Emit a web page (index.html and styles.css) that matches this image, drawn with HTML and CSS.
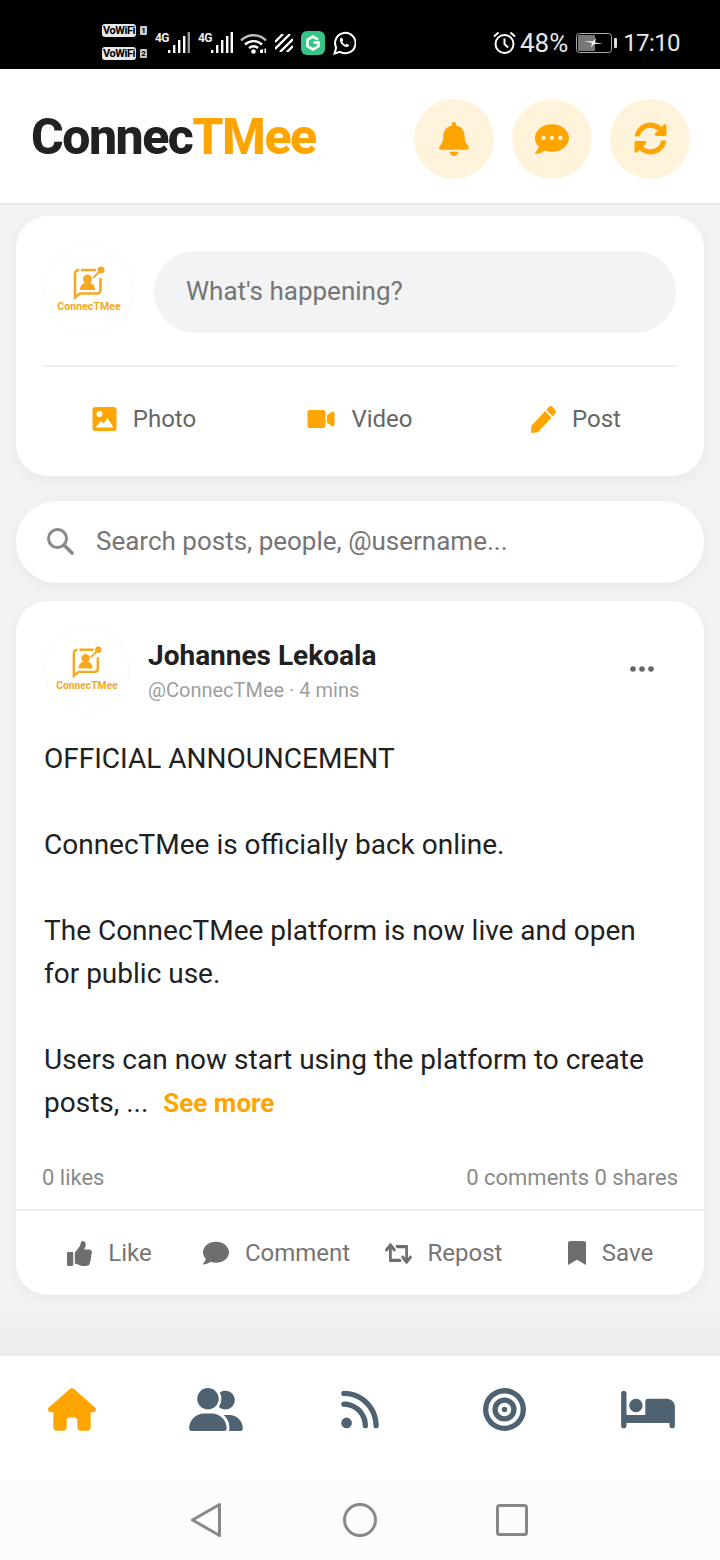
FILE: index.html
```html
<!DOCTYPE html>
<html lang="en">
<head>
    <meta charset="UTF-8">
    <meta name="viewport" content="width=device-width, initial-scale=1.0">
    <title>ConnecTMee</title>
    <link rel="stylesheet" href="styles.css">
</head>
<body>
<div class="page">
    <div class="status-bar">
        <div class="status-left">
            <div class="vowifi">
                <div class="vowifi-row"><span class="vowifi-tag">VoWiFi</span><span class="sim-num">1</span></div>
                <div class="vowifi-row"><span class="vowifi-tag">VoWiFi</span><span class="sim-num">2</span></div>
            </div>
            <div class="signal">
                <span class="net">4G</span>
                <svg width="22" height="24" viewBox="0 0 22 24"><g fill="#fff"><rect x="0" y="19" width="2.4" height="3"/><rect x="5" y="14" width="2.4" height="8"/><rect x="10" y="9" width="2.4" height="13"/><rect x="15" y="5" width="2.4" height="17"/><rect x="19.6" y="1" width="2.4" height="21" opacity=".6"/></g></svg>
            </div>
            <div class="signal">
                <span class="net">4G</span>
                <svg width="22" height="24" viewBox="0 0 22 24"><g fill="#fff"><rect x="0" y="19" width="2.4" height="3"/><rect x="5" y="14" width="2.4" height="8"/><rect x="10" y="9" width="2.4" height="13"/><rect x="15" y="5" width="2.4" height="17"/><rect x="19.6" y="1" width="2.4" height="21"/></g></svg>
            </div>
            <svg class="wifi" width="27" height="22" viewBox="0 0 27 22"><g fill="none" stroke="#fff" stroke-width="2.4"><path d="M1 8.500C8 1.500 19 1.500 26 8.500" opacity=".75"/><path d="M5 12.500C10 8 17 8 22 12.500"/><path d="M9 16c3-2.400 6-2.400 9 0"/></g><circle cx="13.500" cy="19.500" r="2.300" fill="#fff"/><path d="M20 21v-3l3-1v4zM24.500 16.500h1.500v4.500h-1.500z" fill="#fff"/></svg>
            <svg class="stripes" width="18" height="18" viewBox="0 0 18 18"><g stroke="#fff" stroke-width="2.300"><path d="M0 8L8 0M0 15L15 0M5 18L18 5M12 18l6-6"/></g></svg>
            <svg class="app-g" width="24" height="24" viewBox="0 0 24 24"><rect width="24" height="24" rx="6" fill="#35c48a"/><path d="M17 8.500L12 5.600 6.500 8.700v6.600L12 18.400l5.500-3.100V11.500h-5" fill="none" stroke="#fff" stroke-width="2.600"/></svg>
            <svg class="whatsapp" width="23" height="24" viewBox="0 0 23 24"><path d="M1.500 22.500l1.700-5.800A10.200 10.200 0 1 1 7 20.800z" fill="none" stroke="#fff" stroke-width="2"/><path d="M8 6.800c-1.600 1-1.600 3 0 5.400 1.700 2.500 4 4 6 3.800 1.400-.2 2-1.100 2-2l-2.400-1.300-1.200 1.100c-1.400-.6-2.600-1.900-3.200-3.300l1-1.100-1-2.600z" fill="#fff"/></svg>
        </div>
        <div class="status-right">
            <svg width="23" height="24" viewBox="0 0 23 24"><circle cx="11.500" cy="13" r="9" fill="none" stroke="#fff" stroke-width="2"/><path d="M11.500 7.500V13l3.500 3.500" fill="none" stroke="#fff" stroke-width="2"/><path d="M1 5.500L5.500 1.500M22 5.500L17.500 1.500" stroke="#fff" stroke-width="2"/></svg>
            <span class="status-text pct">48%</span>
            <svg class="battery" width="41" height="20" viewBox="0 0 41 20"><rect x=".5" y=".5" width="35" height="19" rx="3" fill="none" stroke="#aaa"/><rect x="2" y="2" width="17" height="16" rx="1" fill="#777"/><path d="M8 8l9 .5 3-3.500-1 4.500 8 1-9 .5-3 3.500 1-4.500z" fill="#fff"/><rect x="38" y="5" width="3" height="10" rx="1" fill="#ddd"/></svg>
            <span class="status-text clock">17:10</span>
        </div>
    </div>

    <header class="top-bar">
        <div class="logo">Connec<span class="logo-accent">TMee</span></div>
        <div class="top-actions">
            <button class="round-btn"><svg width="30" height="34" viewBox="0 0 448 512"><path d="M224 512c35.32 0 63.97-28.65 63.97-64H160.03c0 35.35 28.65 64 63.97 64zm215.39-149.71c-19.32-20.76-55.47-51.99-55.47-154.29 0-77.7-54.48-139.9-127.94-155.16V32c0-17.67-14.32-32-31.98-32s-31.98 14.33-31.98 32v20.84C118.56 68.1 64.08 130.3 64.08 208c0 102.3-36.15 133.53-55.47 154.29-6 6.45-8.66 14.16-8.61 21.71.11 16.4 12.98 32 32.1 32h383.8c19.12 0 32-15.6 32.1-32 .05-7.55-2.61-15.27-8.61-21.71z"/></svg></button>
            <button class="round-btn"><svg width="34" height="34" viewBox="0 0 512 512"><path d="M256 32C114.6 32 0 125.1 0 240c0 49.6 21.4 95 57 130.7C44.5 421.1 2.7 466 2.2 466.5c-2.2 2.3-2.8 5.7-1.5 8.7S4.8 480 8 480c66.3 0 116-31.8 140.6-51.4 32.7 12.3 69 19.4 107.4 19.4 141.4 0 256-93.1 256-208S397.4 32 256 32zM128 272c-17.7 0-32-14.3-32-32s14.3-32 32-32 32 14.3 32 32-14.3 32-32 32zm128 0c-17.7 0-32-14.3-32-32s14.3-32 32-32 32 14.3 32 32-14.3 32-32 32zm128 0c-17.7 0-32-14.3-32-32s14.3-32 32-32 32 14.3 32 32-14.3 32-32 32z"/></svg></button>
            <button class="round-btn"><svg width="33" height="33" viewBox="0 0 512 512"><path d="M370.72 133.28C339.458 104.008 298.888 87.962 255.848 88c-77.458.068-144.328 53.178-162.791 126.85-1.344 5.363-6.122 9.15-11.651 9.15H24.103c-7.498 0-13.194-6.807-11.807-14.176C33.933 94.924 134.813 8 256 8c66.448 0 126.791 26.136 171.315 68.685L463.03 40.97C478.149 25.851 504 36.559 504 57.941V192c0 13.255-10.745 24-24 24H345.941c-21.382 0-32.09-25.851-16.971-40.971l41.75-41.749zM32 296h134.059c21.382 0 32.09 25.851 16.971 40.971l-41.75 41.75c31.262 29.273 71.835 45.319 114.876 45.28 77.418-.07 144.315-53.144 162.787-126.849 1.344-5.363 6.122-9.15 11.651-9.15h57.304c7.498 0 13.194 6.807 11.807 14.176C478.067 417.076 377.187 504 256 504c-66.448 0-126.791-26.136-171.315-68.685L48.97 471.03C33.851 486.149 8 475.441 8 454.059V320c0-13.255 10.745-24 24-24z"/></svg></button>
        </div>
    </header>

    <main class="feed">
        <section class="card composer">
            <div class="composer-top">
                <div class="avatar">
                    <svg width="34" height="34" viewBox="0 0 34 34"><path d="M9 4h15M28.500 12v12c0 2-1.500 3.500-3.500 3.500H8l-5 4V8c0-2.500 2-4 4-4" fill="none" stroke="#f7a823" stroke-width="2.600"/><circle cx="29" cy="4" r="3.500" fill="#f7a823"/><path d="M21 12l6-6" stroke="#f7a823" stroke-width="2"/><circle cx="15.500" cy="13" r="4.500" fill="#f7a823"/><path d="M8 24c0-5 3-7.500 7.500-7.500S23 19 23 24z" fill="#f7a823"/></svg>
                    <span class="avatar-name">ConnecTMee</span>
                </div>
                <div class="whats-happening">What's happening?</div>
            </div>
            <div class="composer-actions">
                <div class="composer-action"><svg width="25" height="24" viewBox="0 0 24 24"><path fill-rule="evenodd" d="M3 0h18a3 3 0 0 1 3 3v18a3 3 0 0 1-3 3H3a3 3 0 0 1-3-3V3a3 3 0 0 1 3-3zM7 4a3 3 0 1 0 0 6 3 3 0 0 0 0-6zM3 20.500h18l-6-9.500-4 5.500-2.500-2.500z"/></svg>Photo</div>
                <div class="composer-action"><svg width="28" height="24" viewBox="0 0 576 512"><path d="M336.2 64H47.8C21.4 64 0 85.4 0 111.8v288.4C0 426.6 21.4 448 47.8 448h288.4c26.4 0 47.8-21.4 47.8-47.8V111.8c0-26.4-21.4-47.8-47.8-47.8zm189.4 37.7L416 177.3v157.4l109.6 75.5c21.2 14.6 50.4-.3 50.4-25.8V127.5c0-25.4-29.1-40.4-50.4-25.8z"/></svg>Video</div>
                <div class="composer-action"><svg width="25" height="27" viewBox="0 0 512 512" preserveAspectRatio="none"><path d="M290.74 93.24l128.02 128.02-277.99 277.99-114.14 12.6C11.35 513.54-1.56 500.62.14 485.34l12.7-114.22 277.9-277.88zm207.2-19.06l-60.11-60.11c-18.75-18.75-49.16-18.75-67.91 0l-56.55 56.55 128.02 128.02 56.55-56.55c18.75-18.76 18.75-49.16 0-67.91z"/></svg>Post</div>
            </div>
        </section>

        <div class="search-box">
            <svg width="28" height="28" viewBox="0 0 28 28"><circle cx="11.500" cy="11.500" r="9" fill="none" stroke="#8a8a8a" stroke-width="3"/><path d="M18 18l8 8" stroke="#8a8a8a" stroke-width="3.600" stroke-linecap="round"/></svg>
            <span>Search posts, people, @username...</span>
        </div>

        <article class="card post">
            <div class="post-head">
                <div class="avatar avatar-small">
                    <svg width="32" height="32" viewBox="0 0 34 34"><path d="M9 4h15M28.500 12v12c0 2-1.500 3.500-3.500 3.500H8l-5 4V8c0-2.500 2-4 4-4" fill="none" stroke="#f7a823" stroke-width="2.600"/><circle cx="29" cy="4" r="3.500" fill="#f7a823"/><path d="M21 12l6-6" stroke="#f7a823" stroke-width="2"/><circle cx="15.500" cy="13" r="4.500" fill="#f7a823"/><path d="M8 24c0-5 3-7.500 7.500-7.500S23 19 23 24z" fill="#f7a823"/></svg>
                    <span class="avatar-name">ConnecTMee</span>
                </div>
                <div class="post-meta">
                    <div class="post-author">Johannes Lekoala</div>
                    <div class="post-handle">@ConnecTMee · 4 mins</div>
                </div>
                <svg class="post-more" width="24" height="6" viewBox="0 0 24 6"><g fill="#666"><circle cx="3" cy="3" r="2.800"/><circle cx="12" cy="3" r="2.800"/><circle cx="21" cy="3" r="2.800"/></g></svg>
            </div>
            <p class="post-body">OFFICIAL ANNOUNCEMENT<br><br>ConnecTMee is officially back online.<br><br>The ConnecTMee platform is now live and open<br>for public use.<br><br>Users can now start using the platform to create<br>posts, ... <a class="see-more">See more</a></p>
            <div class="post-stats">
                <span>0 likes</span>
                <span>0 comments 0 shares</span>
            </div>
            <div class="post-actions">
                <div class="post-action"><svg width="25" height="25" viewBox="0 0 512 512"><path d="M104 224H24c-13.255 0-24 10.745-24 24v240c0 13.255 10.745 24 24 24h80c13.255 0 24-10.745 24-24V248c0-13.255-10.745-24-24-24zM384 81.452c0 42.416-25.97 66.208-33.277 94.548h101.723c33.397 0 59.397 27.746 59.553 58.098.084 17.938-7.546 37.249-19.439 49.197l-.11.11c9.836 23.337 8.237 56.037-9.308 79.469 8.681 25.895-.069 57.704-16.382 74.757 4.298 17.598 2.244 32.575-6.148 44.632C440.202 511.587 389.616 512 346.839 512l-2.845-.001c-48.287-.017-87.806-17.598-119.56-31.725-15.957-7.099-36.821-15.887-52.651-16.178-6.54-.12-11.783-5.457-11.783-11.998v-213.77c0-3.2 1.282-6.271 3.558-8.521 39.614-39.144 56.648-80.587 89.117-113.111 14.804-14.832 20.188-37.236 25.393-58.902C282.515 39.293 291.817 0 312 0c24 0 72 8 72 81.452z"/></svg>Like</div>
                <div class="post-action"><svg width="26" height="26" viewBox="0 0 512 512"><path d="M256 32C114.6 32 0 125.1 0 240c0 49.6 21.4 95 57 130.7C44.5 421.1 2.7 466 2.2 466.5c-2.2 2.3-2.8 5.7-1.5 8.7S4.8 480 8 480c66.3 0 116-31.8 140.6-51.4 32.7 12.3 69 19.4 107.4 19.4 141.4 0 256-93.1 256-208S397.4 32 256 32z"/></svg>Comment</div>
                <div class="post-action"><svg width="27" height="21" viewBox="0 60 640 392" preserveAspectRatio="none"><path d="M629.657 343.598L528.971 444.284c-9.373 9.372-24.568 9.372-33.941 0L394.343 343.598c-9.373-9.373-9.373-24.569 0-33.941l10.823-10.823c9.562-9.562 25.133-9.34 34.419.492L480 342.118V160H292.451a24.005 24.005 0 0 1-16.971-7.029l-16-16C244.361 121.851 255.069 96 276.451 96H520c13.255 0 24 10.745 24 24v222.118l40.416-42.792c9.285-9.831 24.856-10.054 34.419-.492l10.823 10.823c9.372 9.372 9.372 24.569-.001 33.941zm-265.138 15.431A23.999 23.999 0 0 0 347.548 352H160V169.881l40.416 42.792c9.286 9.831 24.856 10.054 34.419.491l10.822-10.822c9.373-9.373 9.373-24.569 0-33.941L144.971 67.716c-9.373-9.373-24.569-9.373-33.941 0L10.343 168.402c-9.373 9.373-9.373 24.569 0 33.941l10.822 10.822c9.562 9.562 25.133 9.34 34.419-.491L96 169.881V392c0 13.255 10.745 24 24 24h243.549c21.382 0 32.09-25.851 16.971-40.971l-16.001-16z"/></svg>Repost</div>
                <div class="post-action"><svg width="18" height="24" viewBox="0 0 384 512"><path d="M0 512V48C0 21.49 21.49 0 48 0h288c26.51 0 48 21.49 48 48v464L192 400 0 512z"/></svg>Save</div>
            </div>
        </article>
    </main>

    <nav class="tab-bar">
        <div class="tab tab-active"><svg width="48" height="43" viewBox="0 0 576 512"><path d="M575.8 255.500c0 18-15 32.100-32 32.100h-32l.7 160.200c0 2.700-.2 5.400-.5 8.100V472c0 22.100-17.900 40-40 40H456c-1.100 0-2.200 0-3.300-.1c-1.400 .1-2.800 .1-4.200 .1H416 392c-22.100 0-40-17.900-40-40V448 384c0-17.700-14.300-32-32-32H256c-17.700 0-32 14.300-32 32v64 24c0 22.100-17.900 40-40 40H160 128.100c-1.500 0-3-.1-4.500-.2c-1.200 .1-2.400 .2-3.600 .2H104c-22.100 0-40-17.900-40-40V360c0-.9 0-1.900 .1-2.800V287.600H32c-18 0-32-14-32-32.100c0-9 3-17 10-24L266.400 8c7-7 15-8 22-8s15 2 21 7L564.800 231.500c8 7 12 15 11 24z"/></svg></div>
        <div class="tab"><svg width="54" height="43" viewBox="0 0 640 512"><path d="M96 128a128 128 0 1 1 256 0A128 128 0 1 1 96 128zM0 482.300C0 383.800 79.800 304 178.300 304h91.400C368.200 304 448 383.800 448 482.300c0 16.400-13.300 29.700-29.700 29.700H29.700C13.300 512 0 498.700 0 482.300zM609.300 512H471.400c5.400-9.400 8.600-20.300 8.600-32v-8c0-60.700-27.100-115.200-69.800-151.800c2.400-.1 4.700-.2 7.100-.2h61.400C567.800 320 640 392.200 640 481.300c0 17-13.800 30.700-30.700 30.700zM432 256c-31 0-59-12.600-79.300-32.900C372.400 196.500 384 163.600 384 128c0-26.800-6.600-52.100-18.300-74.300C384.300 40.100 407.200 32 432 32c61.900 0 112 50.100 112 112s-50.100 112-112 112z"/></svg></div>
        <div class="tab"><svg width="38" height="43" viewBox="0 0 448 512"><path d="M0 64C0 46.300 14.300 32 32 32c229.800 0 416 186.200 416 416c0 17.700-14.300 32-32 32s-32-14.300-32-32C384 253.600 226.400 96 32 96C14.300 96 0 81.700 0 64zM0 416a64 64 0 1 1 128 0A64 64 0 1 1 0 416zM32 160c159.100 0 288 128.900 288 288c0 17.700-14.300 32-32 32s-32-14.300-32-32c0-123.700-100.300-224-224-224c-17.700 0-32-14.300-32-32s14.300-32 32-32z"/></svg></div>
        <div class="tab"><svg width="43" height="43" viewBox="0 0 512 512"><path d="M448 256A192 192 0 1 0 64 256a192 192 0 1 0 384 0zM0 256a256 256 0 1 1 512 0A256 256 0 1 1 0 256zm256 80a80 80 0 1 0 0-160 80 80 0 1 0 0 160zm0-224a144 144 0 1 1 0 288 144 144 0 1 1 0-288zM224 256a32 32 0 1 1 64 0 32 32 0 1 1 -64 0z"/></svg></div>
        <div class="tab"><svg width="54" height="43" viewBox="0 0 640 512"><path d="M32 32c17.700 0 32 14.300 32 32V320H288V160c0-17.700 14.300-32 32-32H544c53 0 96 43 96 96V448c0 17.700-14.300 32-32 32s-32-14.300-32-32V416H352 320 64v32c0 17.700-14.300 32-32 32s-32-14.300-32-32V64C0 46.300 14.300 32 32 32zm144 96a80 80 0 1 1 0 160 80 80 0 1 1 0-160z"/></svg></div>
    </nav>

    <div class="system-nav">
        <svg class="nav-back" width="32" height="36" viewBox="0 0 32 36"><path d="M29.500 2.500v31L2.500 18z" fill="none" stroke="#888" stroke-width="3" stroke-linejoin="round"/></svg>
        <svg width="36" height="36" viewBox="0 0 36 36"><circle cx="18" cy="18" r="15.500" fill="none" stroke="#888" stroke-width="3"/></svg>
        <svg width="32" height="32" viewBox="0 0 32 32"><rect x="1.500" y="1.500" width="29" height="29" rx="2" fill="none" stroke="#888" stroke-width="3"/></svg>
    </div>
</div>
</body>
</html>
```

FILE: styles.css
```css
* {
    box-sizing: border-box;
}

body {
    margin: 0;
    font-family: 'Roboto', 'Liberation Sans', sans-serif;
    background-color: #f2f2f2;
    color: #212121;
}

.page {
    width: 720px;
    height: 1560px;
    display: flex;
    flex-direction: column;
    overflow: hidden;
}

/* phone status bar */
.status-bar {
    height: 69px;
    background-color: #000;
    color: #eee;
    display: flex;
    align-items: center;
    justify-content: space-between;
    padding: 17px 40px 0 102px;
    flex-shrink: 0;
}

.status-left,
.status-right {
    display: flex;
    align-items: center;
}

.status-left {
    gap: 8px;
}

.vowifi {
    display: flex;
    flex-direction: column;
    gap: 10px;
    margin-top: -3px;
}

.vowifi-row {
    display: flex;
    align-items: center;
    gap: 4px;
}

.vowifi-tag {
    background-color: #e8e8e8;
    color: #000;
    font-size: 11px;
    font-weight: 700;
    line-height: 13px;
    height: 13px;
    width: 34px;
    text-align: center;
    border-radius: 3px;
    letter-spacing: -.4px;
}

.sim-num {
    background-color: #ccc;
    color: #000;
    font-size: 8px;
    font-weight: 700;
    line-height: 9px;
    width: 7px;
    height: 9px;
    text-align: center;
    border-radius: 1px;
}

.signal {
    display: flex;
    align-items: flex-end;
}

.net {
    color: #eee;
    font-size: 12px;
    font-weight: 700;
    width: 13px;
    align-self: flex-start;
    line-height: 14px;
    letter-spacing: -.6px;
}

.wifi {
    margin-left: -1px;
}

.status-text {
    font-size: 24px;
    color: #e6e6e6;
    margin-left: 8px;
}

.pct {
    font-size: 26px;
    margin-left: 4px;
}

.clock {
    letter-spacing: -.6px;
    margin-left: 6px;
}

.battery {
    margin-left: 8px;
}

/* header */
.top-bar {
    height: 136px;
    background-color: #fff;
    border-bottom: 2px solid #e8e8e8;
    display: flex;
    align-items: center;
    justify-content: space-between;
    padding: 5px 30px 0 31px;
    flex-shrink: 0;
}

.logo {
    font-size: 50px;
    font-weight: 800;
    letter-spacing: -1.5px;
    color: #212121;
    margin-bottom: 3px;
}

.logo-accent {
    color: #ffa500;
}

.top-actions {
    display: flex;
    gap: 18px;
}

.round-btn {
    width: 80px;
    height: 80px;
    border: none;
    border-radius: 50%;
    background-color: #fff3dc;
    display: flex;
    align-items: center;
    justify-content: center;
    padding: 0;
}

.round-btn svg {
    fill: #ffa500;
}

/* feed */
.feed {
    flex: 1;
    padding: 11px 16px 0;
    background: linear-gradient(#f2f2f2 96%, #ededed);
}

.card {
    background-color: #fff;
    border-radius: 32px;
    box-shadow: 0 4px 12px rgba(0, 0, 0, 0.04);
}

.composer {
    height: 260px;
    padding: 29px 28px 0;
}

.composer-top {
    display: flex;
    align-items: flex-start;
    gap: 20px;
    padding-bottom: 30px;
    border-bottom: 2px solid #efefef;
}

.avatar {
    width: 90px;
    height: 90px;
    border-radius: 50%;
    border: 1px dotted #f1f1f1;
    display: flex;
    flex-direction: column;
    align-items: center;
    justify-content: center;
    flex-shrink: 0;
}

.avatar-small {
    width: 86px;
    height: 86px;
}

.avatar-name {
    font-size: 10.6px;
    font-weight: 700;
    color: #f7a823;
    line-height: 14px;
}

.avatar-small .avatar-name {
    font-size: 10.3px;
    line-height: 16px;
}

.whats-happening {
    flex: 1;
    height: 82px;
    margin-top: 6px;
    border-radius: 41px;
    background-color: #f1f3f4;
    color: #757575;
    font-size: 26px;
    line-height: 80px;
    padding-left: 32px;
}

.composer-actions {
    display: grid;
    grid-template-columns: repeat(3, 216px);
    justify-items: center;
    margin: 33px -8px 0;
}

.composer-action {
    display: flex;
    align-items: center;
    gap: 16px;
    font-size: 24px;
    color: #666;
    line-height: 38px;
}

.composer-action svg {
    fill: #ffa500;
}

.search-box {
    height: 82px;
    margin-top: 25px;
    background-color: #fff;
    border-radius: 41px;
    display: flex;
    align-items: center;
    gap: 22px;
    padding: 0 0 2px 30px;
    font-size: 26px;
    color: #757575;
    box-shadow: 0 4px 12px rgba(0, 0, 0, 0.04);
}

.post {
    margin-top: 18px;
    height: 694px;
    padding: 26px 0 0;
}

.post-head {
    display: flex;
    align-items: flex-start;
    padding: 0 28px;
    gap: 18px;
}

.post-meta {
    flex: 1;
    padding-top: 10px;
}

.post-author {
    font-size: 28px;
    font-weight: 700;
    color: #212121;
    line-height: 38px;
}

.post-handle {
    font-size: 20px;
    color: #9e9e9e;
    line-height: 30px;
}

.post-more {
    margin: 39px 22px 0 0;
}

.post-body {
    margin: 24px 0 0;
    padding: 0 28px;
    font-size: 28px;
    line-height: 43px;
    color: #212121;
}

.see-more {
    font-size: 26px;
    font-weight: 700;
    color: #ffa500;
    margin-left: 8px;
}

.post-stats {
    display: flex;
    justify-content: space-between;
    padding: 0 26px;
    margin-top: 37px;
    font-size: 22px;
    line-height: 32px;
    color: #8a8a8a;
}

.post-actions {
    display: grid;
    grid-template-columns: repeat(4, 1fr);
    justify-items: center;
    align-items: center;
    padding: 0 10px;
    margin-top: 15px;
    height: 86px;
    border-top: 2px solid #efefef;
}

.post-action {
    display: flex;
    align-items: center;
    gap: 16px;
    font-size: 24px;
    color: #757575;
}

.post-action svg {
    fill: #6e6e6e;
}

/* bottom tabs */
.tab-bar {
    height: 126px;
    background-color: #fff;
    border-top: 2px solid #ececec;
    display: grid;
    grid-template-columns: repeat(5, 1fr);
    justify-items: center;
    padding-top: 32px;
    flex-shrink: 0;
}

.tab svg {
    fill: #4f6272;
    display: block;
}

.tab-active svg {
    fill: #ffa500;
}

.system-nav {
    height: 80px;
    background-color: #fcfcfc;
    display: flex;
    align-items: center;
    justify-content: center;
    gap: 118px;
    padding-right: 2px;
    flex-shrink: 0;
}

.nav-back {
    margin-right: 2px;
}
```
